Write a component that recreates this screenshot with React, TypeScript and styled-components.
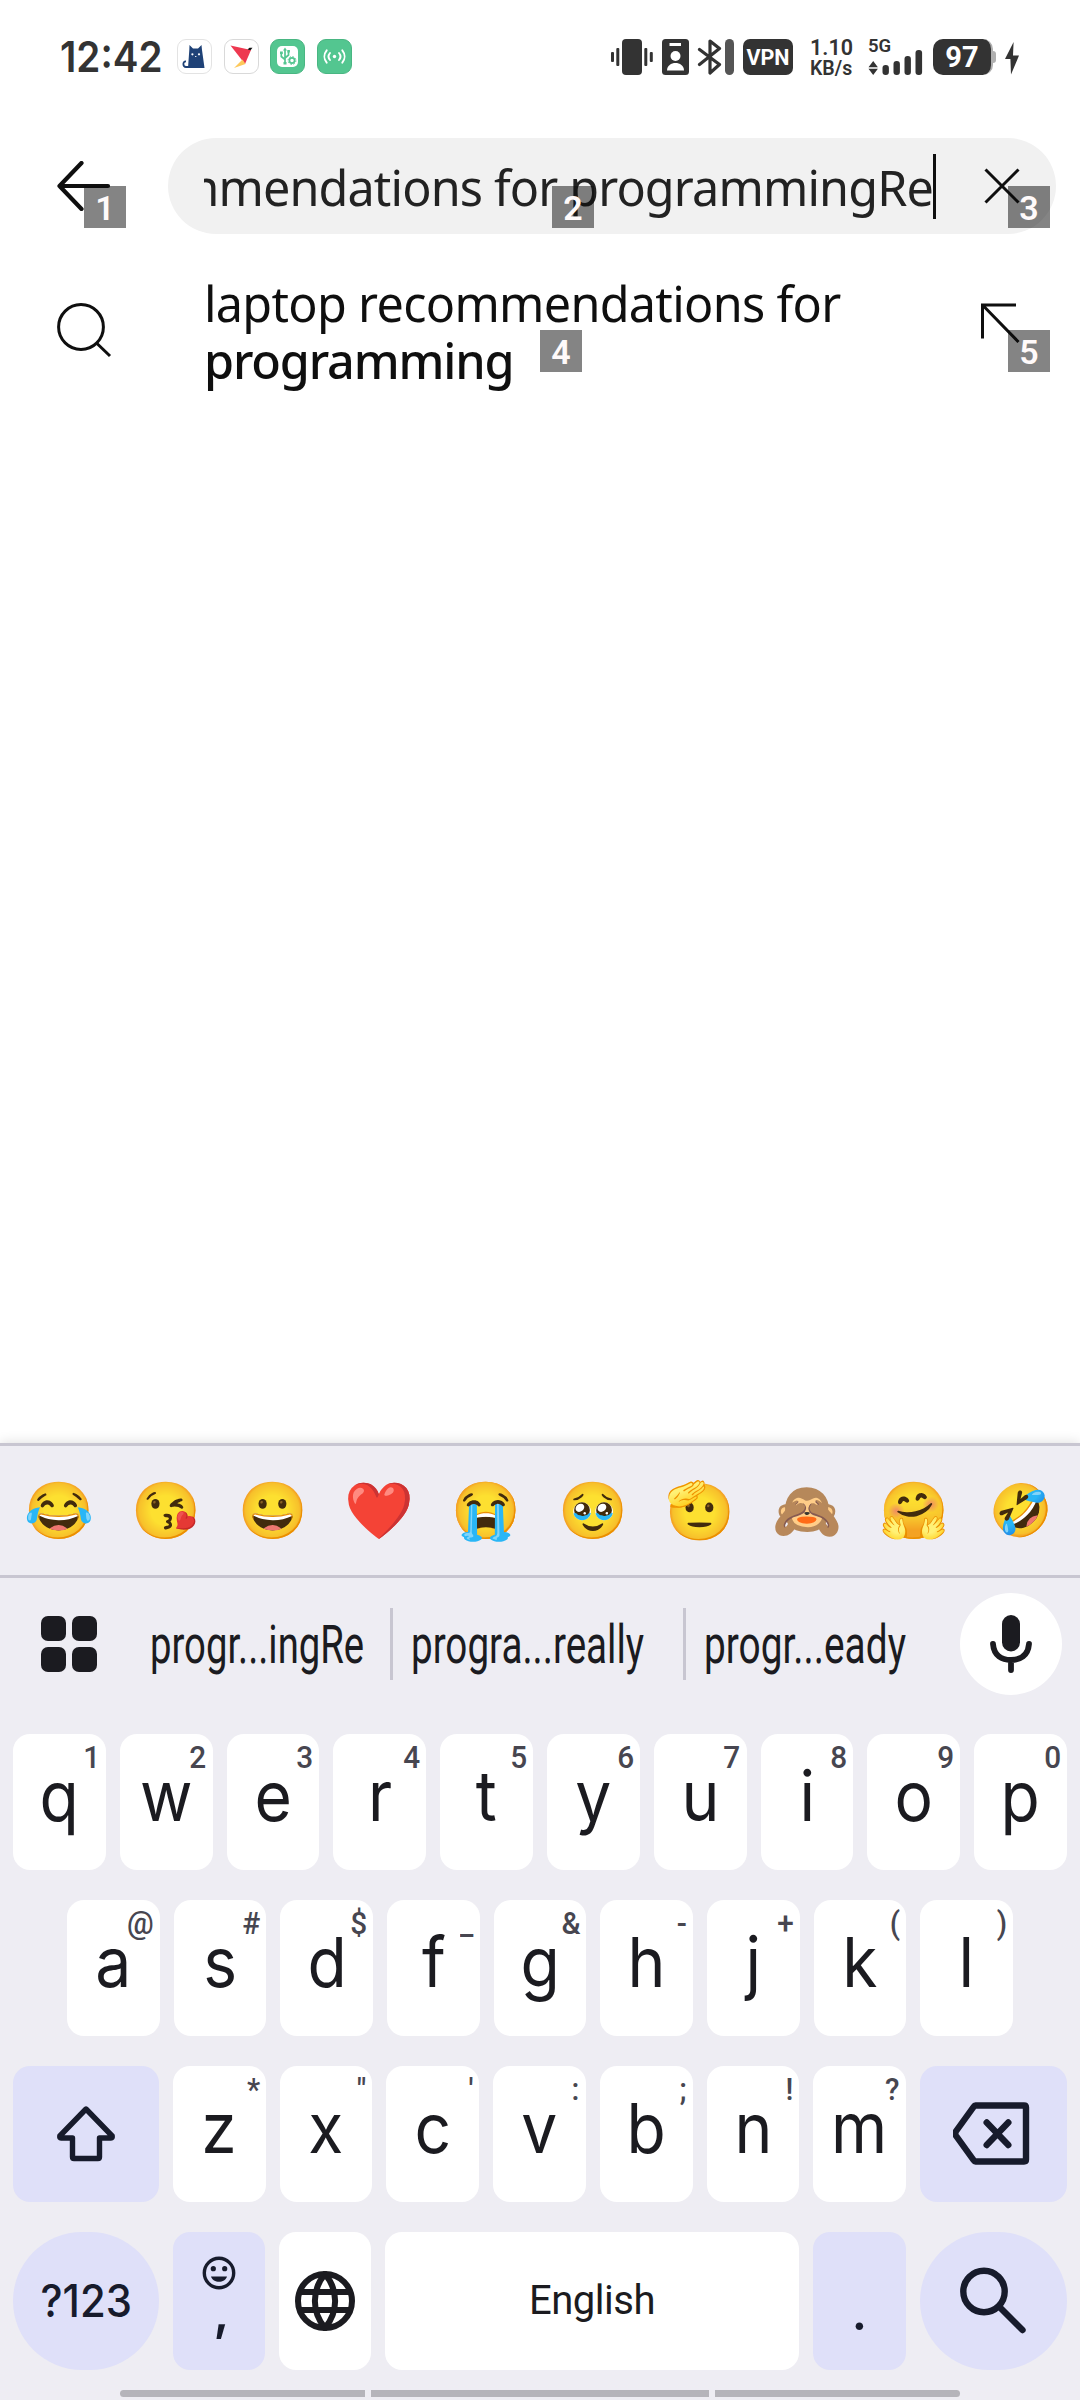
import React, { useLayoutEffect, useRef, useState } from "react";
import type { ReactNode } from "react";
import styled, { createGlobalStyle, css } from "styled-components";

const ink = "#1b1b20";
const navy = "#171b2c";
const status = "#333333";
const ui = `Inter, Roboto, "Liberation Sans", sans-serif`;
const narrow = `Roboto, Inter, "Liberation Sans", sans-serif`;
const reading = `"Noto Sans", "Open Sans", sans-serif`;

const GlobalStyle = createGlobalStyle`
  * { box-sizing: border-box; }
  body { margin: 0; background: #fff; }
  svg { display: block; flex: none; }
`;

const Screen = styled.main`
  width: 1080px;
  height: 2400px;
  display: flex;
  flex-direction: column;
  overflow: hidden;
  background: #fff;
  font-family: ${ui};
`;

/* ---------- status bar ---------- */

const StatusBar = styled.header`
  height: 138px;
  padding: 39px 61px 0 60px;
  display: flex;
  justify-content: space-between;
  align-items: flex-start;
  color: ${status};
`;

const StatusGroup = styled.div`
  display: flex;
  align-items: flex-start;
`;

const Clock = styled.time`
  width: 117px;
  font: 600 42px/36px ${ui};
  white-space: nowrap;
  transform: scaleX(0.92);
  transform-origin: 0 50%;
`;

const AppBadge = styled.span<{ $fill: string; $edge: string }>`
  width: 35px;
  height: 35px;
  margin-right: 11.7px;
  border-radius: 9px;
  border: 1px solid ${(p) => p.$edge};
  background: ${(p) => p.$fill};
  display: grid;
  place-items: center;
`;

const VpnTag = styled.span`
  width: 50px;
  height: 36px;
  margin: 0 17px 0 9px;
  border-radius: 7px;
  background: ${status};
  color: #fff;
  font: 700 21.5px/37px ${narrow};
  text-align: center;
`;

const NetSpeed = styled.div`
  width: 58px;
  display: flex;
  flex-direction: column;
  white-space: nowrap;
`;

const SpeedValue = styled.span`
  font: 600 21.5px/17px ${narrow};
`;

const SpeedUnit = styled.span`
  margin-top: 5px;
  font: 600 19.5px/16px ${narrow};
`;

const Signal = styled.div`
  width: 65px;
  height: 36px;
  display: flex;
  flex-direction: column;
`;

const SignalLabel = styled.span`
  height: 0;
  font: 600 18.5px/15px ${narrow};
`;

const Battery = styled.div`
  width: 60px;
  height: 36px;
  border-radius: 10px;
  border-right: 2px solid #b0b0b0;
  background: ${status};
  color: #fff;
  font: 700 29px/37px ${narrow};
  text-align: center;
`;

const BatteryTip = styled.span`
  width: 3px;
  height: 12px;
  margin: 12px 9px 0 0;
  border-radius: 0 3px 3px 0;
  background: #b0b0b0;
`;

/* ---------- search header ---------- */

const SearchBar = styled.section`
  height: 96px;
  padding: 0 24px 0 56px;
  display: flex;
  align-items: center;
`;

const IconButton = styled.button<{ $w: number; $h: number }>`
  position: relative;
  flex: none;
  width: ${(p) => p.$w}px;
  height: ${(p) => p.$h}px;
  padding: 0;
  border: 0;
  background: none;
  display: flex;
`;

const SearchField = styled.div`
  position: relative;
  flex: 1;
  height: 96px;
  padding: 0 36px;
  border-radius: 48px;
  background: #f1f1f1;
  display: flex;
  align-items: center;
`;

const Query = styled.div`
  flex: none;
  width: 729px;
  height: 96px;
  overflow: hidden;
  display: flex;
  justify-content: flex-end;
  font: 400 48.5px/98px ${reading};
  letter-spacing: -0.85px;
  color: #222;
  white-space: nowrap;
`;

const Caret = styled.span`
  flex: none;
  width: 3px;
  height: 65px;
  margin-right: 48px;
  background: #0f0f0f;
`;

/* Numbered marker laid over a tappable element. */
const Marker = styled.span<{ $x: number; $y: number }>`
  position: absolute;
  left: ${(p) => p.$x}px;
  top: ${(p) => p.$y}px;
  z-index: 1;
  width: 42px;
  height: 42px;
  background: rgba(10, 10, 10, 0.5);
  color: #fffafa;
  font: 600 34px/44px ${narrow};
  text-align: center;
`;

/* ---------- suggestion ---------- */

const Suggestion = styled.section`
  position: relative;
  height: 144px;
  margin-top: 24px;
  padding: 0 57px 0 56px;
  display: flex;
`;

const SuggestionIcon = styled.span`
  width: 56px;
  margin-top: 45px;
`;

const SuggestionText = styled.p`
  flex: 1;
  margin: 17px 0 0 92px;
  font: 400 48.5px/57px ${reading};
  letter-spacing: -0.68px;
  color: #0f0f0f;
`;

const Completion = styled.strong`
  font-weight: 500;
  letter-spacing: -1.15px;
`;

const InsertSlot = styled.span`
  width: 43px;
  margin-top: 45px;
`;

/* ---------- keyboard ---------- */

const Keyboard = styled.section`
  height: 957px;
  margin-top: auto;
  background: #eeedf3;
  box-shadow: 0 0 12px rgba(0, 0, 0, 0.14);
  display: flex;
  flex-direction: column;
`;

const EmojiRow = styled.div`
  height: 135px;
  padding: 0 5.5px;
  border-top: 3px solid #c8c6d1;
  border-bottom: 3px solid #c8c6d1;
  display: flex;
  align-items: center;
`;

const Emoji = styled.span<{ $size?: number }>`
  flex: 1;
  font: ${(p) => p.$size ?? 56}px/130px "Noto Color Emoji", sans-serif;
  display: flex;
  justify-content: center;
`;

const PredictionRow = styled.div`
  height: 156px;
  padding: 0 18px 0 41px;
  display: flex;
  align-items: flex-start;
`;

const AppsGrid = styled.div`
  margin: 38px 53px 0 0;
  display: grid;
  grid-template-columns: 25px 25px;
  grid-auto-rows: 25px;
  gap: 6px;
`;

const AppsDot = styled.span`
  border-radius: 7px;
  background: ${ink};
`;

const Prediction = styled.span<{ $w: number; $gap: number }>`
  width: ${(p) => p.$w}px;
  margin-right: ${(p) => p.$gap}px;
  font: 400 54px/133px ${narrow};
  color: ${ink};
  white-space: nowrap;
`;

const Squeezed = styled.span`
  display: inline-block;
  transform-origin: 0 50%;
`;

const Divider = styled.i<{ $gap: number }>`
  width: 3px;
  height: 72px;
  margin: 30px ${(p) => p.$gap}px 0 0;
  background: #c8c6d1;
`;

const MicButton = styled.div`
  width: 102px;
  height: 102px;
  margin: 15px 0 0 auto;
  border-radius: 50%;
  background: #fff;
  display: grid;
  place-items: center;
`;

const KeyRow = styled.div<{ $inset?: number; $h?: number }>`
  height: ${(p) => p.$h ?? 136}px;
  margin-bottom: 30px;
  padding: 0 ${(p) => p.$inset ?? 13}px;
  display: flex;
  gap: 14px;
`;

const Key = styled.div<{ $w?: number; $tint?: boolean; $round?: boolean }>`
  position: relative;
  ${(p) =>
    p.$w
      ? css`
          flex: none;
          width: ${p.$w}px;
        `
      : css`
          flex: 1;
        `}
  border-radius: ${(p) => (p.$round ? 70 : 17)}px;
  background: ${(p) => (p.$tint ? "#dfe0f9" : "#fff")};
  color: ${(p) => (p.$tint ? navy : ink)};
  display: flex;
  justify-content: center;
  align-items: center;
`;

const Letter = styled.span`
  align-self: flex-start;
  font: 400 69px/125px ${ui};
  transform: scaleX(0.93);
`;

const Hint = styled.span`
  position: absolute;
  top: 0;
  right: 6px;
  font: 500 32px/46px ${narrow};
  color: #474650;
  transform: scaleX(0.93);
  transform-origin: 100% 50%;
`;

const ModeLabel = styled.span`
  font: 500 45px/136px ${ui};
  transform: scaleX(0.93);
`;

const SpaceLabel = styled.span`
  font: 400 40px/138px ${narrow};
  letter-spacing: -0.5px;
`;

const Punctuation = styled.span`
  align-self: flex-start;
  font: 500 52px/160px ${ui};
`;

const CommaStack = styled.div`
  align-self: stretch;
  padding-top: 24px;
  display: flex;
  flex-direction: column;
  align-items: center;
`;

const Comma = styled.span`
  margin: -4px 0 0 5px;
  font: 600 50px/52px ${ui};
`;

const NavBar = styled.div`
  padding: 0 120px;
  margin-top: -10px;
  display: grid;
  grid-template-columns: 245px 338px 245px;
  gap: 6px;
`;

const NavPill = styled.i<{ $edge?: "left" | "right" }>`
  height: 7px;
  background: #b5b4ba;
  border-radius: ${(p) =>
    p.$edge === "left" ? "4px 0 0 4px" : p.$edge === "right" ? "0 4px 4px 0" : "0"};
`;

/* ---------- pieces ---------- */

function FitText({ width, gap, children }: { width: number; gap: number; children: string }) {
  const ref = useRef<HTMLSpanElement>(null);
  const [scale, setScale] = useState(1);
  useLayoutEffect(() => {
    if (ref.current) setScale(width / ref.current.offsetWidth);
  }, [width, children]);
  return (
    <Prediction $w={width} $gap={gap}>
      <Squeezed ref={ref} style={{ transform: `scaleX(${scale})` }}>
        {children}
      </Squeezed>
    </Prediction>
  );
}

const CatIcon = () => (
  <svg width="25" height="25" viewBox="0 0 25 25">
    <path d="M7.5 1 L11 4.5 H16 L19.5 1 L20 6 L22.5 24 H6 L7.3 6 Z" fill="#1f4277" />
    <path d="M7 23 H4 C0.5 23 0.5 17 4 17.5" fill="none" stroke="#1f4277" strokeWidth="1.8" />
    <circle cx="10.4" cy="10.3" r="1.1" fill="#fff" />
    <circle cx="17" cy="10.3" r="1.1" fill="#fff" />
    <path d="M13 12.5 h1.4" stroke="#fff" strokeWidth=".9" />
  </svg>
);

const BirdIcon = () => (
  <svg width="25" height="25" viewBox="0 0 25 25">
    <path d="M1.5 1.5 L22 6 L16 20 Z" fill="#ee3850" />
    <path d="M13.5 15.5 L16.5 20 L5 24 Z" fill="#fdc95c" />
    <path d="M18.5 5.5 L20.5 3.8 H23.5 L21.5 6.2 Z" fill="#111" />
  </svg>
);

const UsbIcon = () => (
  <svg width="23" height="23" viewBox="0 0 23 23">
    <rect x="1" y="1" width="21" height="21" rx="5" fill="#fff" />
    <g fill="none" stroke="#53c690" strokeWidth="1.7">
      <path d="M9 4 V19 M5.3 8 V11.5 L9 14.5 M12.5 6.5 V10 L9 13" />
      <circle cx="16" cy="15.5" r="2.6" />
      <circle cx="16" cy="15.5" r="3.9" strokeWidth="1" strokeDasharray="1.5 1.56" />
    </g>
    <path d="M9 2.5 L11 5.5 H7 Z M4 6.5 h2.8 v2.6 h-2.8 Z M11.3 5 h2.6 v2.6 h-2.6 Z M7.5 17 h3 v2.5 h-3 Z" fill="#53c690" />
  </svg>
);

const CastIcon = () => (
  <svg width="25" height="25" viewBox="0 0 25 25" fill="none" stroke="#fff" strokeWidth="1.9" strokeLinecap="round">
    <circle cx="12.5" cy="12.5" r="1.7" fill="#fff" stroke="none" />
    <path d="M8 9 C6.3 11 6.3 14 8 16 M17 9 C18.7 11 18.7 14 17 16 M4.7 6.3 C1.7 10 1.7 15 4.7 18.7 M20.3 6.3 C23.3 10 23.3 15 20.3 18.7" />
  </svg>
);

const SystemIcons = () => (
  <svg width="124" height="36" viewBox="0 0 124 36">
    <g fill={status}>
      <rect x="12" y="0" width="20" height="36" rx="4" />
      <rect x="1" y="13" width="3" height="10" rx="1" />
      <rect x="6.3" y="9" width="3" height="18" rx="1" />
      <rect x="34.3" y="9" width="3" height="18" rx="1" />
      <rect x="39.8" y="13" width="3" height="10" rx="1" />
      <rect x="52" y="0" width="27" height="36" rx="3.5" />
    </g>
    <g fill="#fff">
      <rect x="59.5" y="4" width="11.5" height="3" />
      <circle cx="65.5" cy="17" r="5" />
      <path d="M57 31.5 C57 21.5 74 21.5 74 31.5 Z" />
    </g>
    <path
      d="M89.5 10.5 L109.5 25.5 L100 34 V2 L109.5 9.5 L89.5 25.5"
      fill="none"
      stroke={status}
      strokeWidth="3.2"
      strokeLinejoin="round"
      strokeLinecap="round"
    />
    <rect x="115" y="0" width="9" height="36" rx="4.5" fill="#555" />
  </svg>
);

const SignalIcon = () => (
  <svg width="56" height="36" viewBox="0 0 56 36" fill={status}>
    <path d="M5.2 22 L9.9 28.2 H0.5 Z M5.2 36 L0.5 29.8 H9.9 Z" />
    <rect x="14.5" y="26" width="6.4" height="10" rx="3" />
    <rect x="25.5" y="22" width="6.4" height="14" rx="3" />
    <rect x="36.5" y="17" width="6.4" height="19" rx="3" />
    <rect x="47.5" y="11" width="6.6" height="25" rx="3" />
  </svg>
);

const BoltIcon = () => (
  <svg width="14" height="36" viewBox="0 0 14 36">
    <path d="M8.6 3 L0 20 H5.4 L6 35.5 L14 16.5 H8 Z" fill={status} />
  </svg>
);

const BackIcon = () => (
  <svg width="56" height="50" viewBox="0 0 56 50" fill="none" stroke="#0f0f0f" strokeWidth="4.2" strokeLinecap="round" strokeLinejoin="round">
    <path d="M25.5 2 L3.5 25 L25.5 48 M3.5 25 H52" />
  </svg>
);

const ClearIcon = () => (
  <svg width="36" height="36" viewBox="0 0 36 36" fill="none" stroke="#0f0f0f" strokeWidth="3">
    <path d="M1.5 1.5 L34.5 34.5 M34.5 1.5 L1.5 34.5" />
  </svg>
);

const SearchIcon = () => (
  <svg width="56" height="56" viewBox="0 0 56 56" fill="none" stroke="#0f0f0f" strokeWidth="3">
    <circle cx="25" cy="24" r="22.4" />
    <path d="M41 40.5 L54 53" />
  </svg>
);

const InsertIcon = () => (
  <svg width="40" height="40" viewBox="0 0 40 40" fill="none" stroke="#0f0f0f" strokeWidth="3">
    <path d="M36 2 H2.5 V35.5 M3 2.5 L38.5 39" />
  </svg>
);

const MicIcon = () => (
  <svg width="42" height="58" viewBox="0 0 42 58">
    <rect x="12" y="0" width="18" height="36.5" rx="9" fill={ink} />
    <path d="M3 29 C4 41 12 45 21 45 C30 45 38 41 39 29 M21 45 V55" fill="none" stroke={ink} strokeWidth="5.8" strokeLinecap="round" />
  </svg>
);

const ShiftIcon = () => (
  <svg width="62" height="62" viewBox="0 0 62 62" fill="none" stroke={navy} strokeWidth="5.4" strokeLinejoin="round">
    <path d="M31 6 L4.8 33 Q4.4 35 6 35 H17.5 V54 Q17.5 55.5 19 55.5 H43 Q44.5 55.5 44.5 54 V35 H56 Q57.6 35 57.2 33 Z" />
  </svg>
);

const BackspaceIcon = () => (
  <svg width="82" height="66" viewBox="0 0 82 66" fill="none" stroke={navy} strokeWidth="6.4" strokeLinejoin="round" strokeLinecap="round">
    <path d="M22.5 4.5 H71 Q73 4.5 73 6.5 V58.5 Q73 60.5 71 60.5 H22.5 Q21.5 60.5 20.5 59 L2.8 34.5 Q1.8 32.5 2.8 30.5 L20.5 6 Q21.5 4.5 22.5 4.5 Z" />
    <path d="M33.7 21.5 L55.3 44 M55.3 21.5 L33.7 44" />
  </svg>
);

const EmojiKeyIcon = () => (
  <svg width="34" height="34" viewBox="0 0 34 34">
    <circle cx="17" cy="17" r="14.7" fill="none" stroke={navy} strokeWidth="3.4" />
    <circle cx="11.3" cy="12.7" r="2.6" fill={navy} />
    <circle cx="22.7" cy="12.7" r="2.6" fill={navy} />
    <path d="M9 20.5 H25 C23 27.5 11 27.5 9 20.5 Z" fill={navy} />
  </svg>
);

const GlobeIcon = () => (
  <svg width="60" height="60" viewBox="0 0 60 60" fill="none" stroke={ink} strokeWidth="6">
    <circle cx="30" cy="30" r="27" />
    <path d="M5 21 H55 M5 39 H55" />
    <path d="M30 3 C16.5 19 16.5 41 30 57 C43.5 41 43.5 19 30 3 Z" />
  </svg>
);

const FindIcon = () => (
  <svg width="68" height="68" viewBox="0 0 68 68" fill="none" stroke={navy} strokeWidth="6.4" strokeLinecap="round">
    <circle cx="24" cy="24.5" r="20.7" />
    <path d="M39.5 40 L62.5 63" />
  </svg>
);

const emojis: { glyph: string; size?: number }[] = [
  { glyph: "😂" },
  { glyph: "😘" },
  { glyph: "😀" },
  { glyph: "❤️" },
  { glyph: "😭" },
  { glyph: "🥹" },
  { glyph: "🫡" },
  { glyph: "🙈" },
  { glyph: "🤗" },
  { glyph: "🤣", size: 51 },
];

type KeySpec = [letter: string, hint: string];
const topRow: KeySpec[] = [["q", "1"], ["w", "2"], ["e", "3"], ["r", "4"], ["t", "5"], ["y", "6"], ["u", "7"], ["i", "8"], ["o", "9"], ["p", "0"]];
const homeRow: KeySpec[] = [["a", "@"], ["s", "#"], ["d", "$"], ["f", "_"], ["g", "&"], ["h", "-"], ["j", "+"], ["k", "("], ["l", ")"]];
const lowerRow: KeySpec[] = [["z", "*"], ["x", "\""], ["c", "'"], ["v", ":"], ["b", ";"], ["n", "!"], ["m", "?"]];

const LetterKeys = ({ keys }: { keys: KeySpec[] }): ReactNode =>
  keys.map(([letter, hint]) => (
    <Key key={letter}>
      <Letter>{letter}</Letter>
      <Hint>{hint}</Hint>
    </Key>
  ));

export default function App() {
  return (
    <Screen>
      <GlobalStyle />
      <StatusBar>
        <StatusGroup>
          <Clock>12:42</Clock>
          <AppBadge $fill="#fff" $edge="#e3e3e3"><CatIcon /></AppBadge>
          <AppBadge $fill="#fff" $edge="#d9d9d9"><BirdIcon /></AppBadge>
          <AppBadge $fill="#53c690" $edge="#49b682"><UsbIcon /></AppBadge>
          <AppBadge $fill="#53c690" $edge="#49b682"><CastIcon /></AppBadge>
        </StatusGroup>
        <StatusGroup>
          <SystemIcons />
          <VpnTag>VPN</VpnTag>
          <NetSpeed>
            <SpeedValue>1.10</SpeedValue>
            <SpeedUnit>KB/s</SpeedUnit>
          </NetSpeed>
          <Signal>
            <SignalLabel>5G</SignalLabel>
            <SignalIcon />
          </Signal>
          <Battery>97</Battery>
          <BatteryTip />
          <BoltIcon />
        </StatusGroup>
      </StatusBar>

      <SearchBar>
        <IconButton $w={112} $h={50} aria-label="Back">
          <BackIcon />
          <Marker $x={28} $y={25}>1</Marker>
        </IconButton>
        <SearchField>
          <Query>laptop recommendations for programmingRe</Query>
          <Caret />
          <Marker $x={384} $y={48}>2</Marker>
          <IconButton $w={36} $h={36} aria-label="Clear">
            <ClearIcon />
            <Marker $x={24} $y={18}>3</Marker>
          </IconButton>
        </SearchField>
      </SearchBar>

      <Suggestion>
        <SuggestionIcon><SearchIcon /></SuggestionIcon>
        <SuggestionText>
          laptop recommendations for
          <br />
          <Completion>programming</Completion>
        </SuggestionText>
        <InsertSlot><InsertIcon /></InsertSlot>
        <Marker $x={540} $y={72}>4</Marker>
        <Marker $x={1008} $y={72}>5</Marker>
      </Suggestion>

      <Keyboard>
        <EmojiRow>
          {emojis.map((e) => (
            <Emoji key={e.glyph} $size={e.size}>{e.glyph}</Emoji>
          ))}
        </EmojiRow>
        <PredictionRow>
          <AppsGrid>
            <AppsDot />
            <AppsDot />
            <AppsDot />
            <AppsDot />
          </AppsGrid>
          <FitText width={214} gap={26}>progr...ingRe</FitText>
          <Divider $gap={18} />
          <FitText width={233} gap={39}>progra...really</FitText>
          <Divider $gap={18} />
          <FitText width={202} gap={0}>progr...eady</FitText>
          <MicButton><MicIcon /></MicButton>
        </PredictionRow>
        <KeyRow>
          <LetterKeys keys={topRow} />
        </KeyRow>
        <KeyRow $inset={67}>
          <LetterKeys keys={homeRow} />
        </KeyRow>
        <KeyRow>
          <Key $w={146} $tint><ShiftIcon /></Key>
          <LetterKeys keys={lowerRow} />
          <Key $w={147} $tint><BackspaceIcon /></Key>
        </KeyRow>
        <KeyRow $h={138}>
          <Key $w={146} $tint $round><ModeLabel>?123</ModeLabel></Key>
          <Key $w={92} $tint>
            <CommaStack>
              <EmojiKeyIcon />
              <Comma>,</Comma>
            </CommaStack>
          </Key>
          <Key $w={92}><GlobeIcon /></Key>
          <Key><SpaceLabel>English</SpaceLabel></Key>
          <Key $w={93} $tint><Punctuation>.</Punctuation></Key>
          <Key $w={147} $tint $round><FindIcon /></Key>
        </KeyRow>
        <NavBar>
          <NavPill $edge="left" />
          <NavPill />
          <NavPill $edge="right" />
        </NavBar>
      </Keyboard>
    </Screen>
  );
}
